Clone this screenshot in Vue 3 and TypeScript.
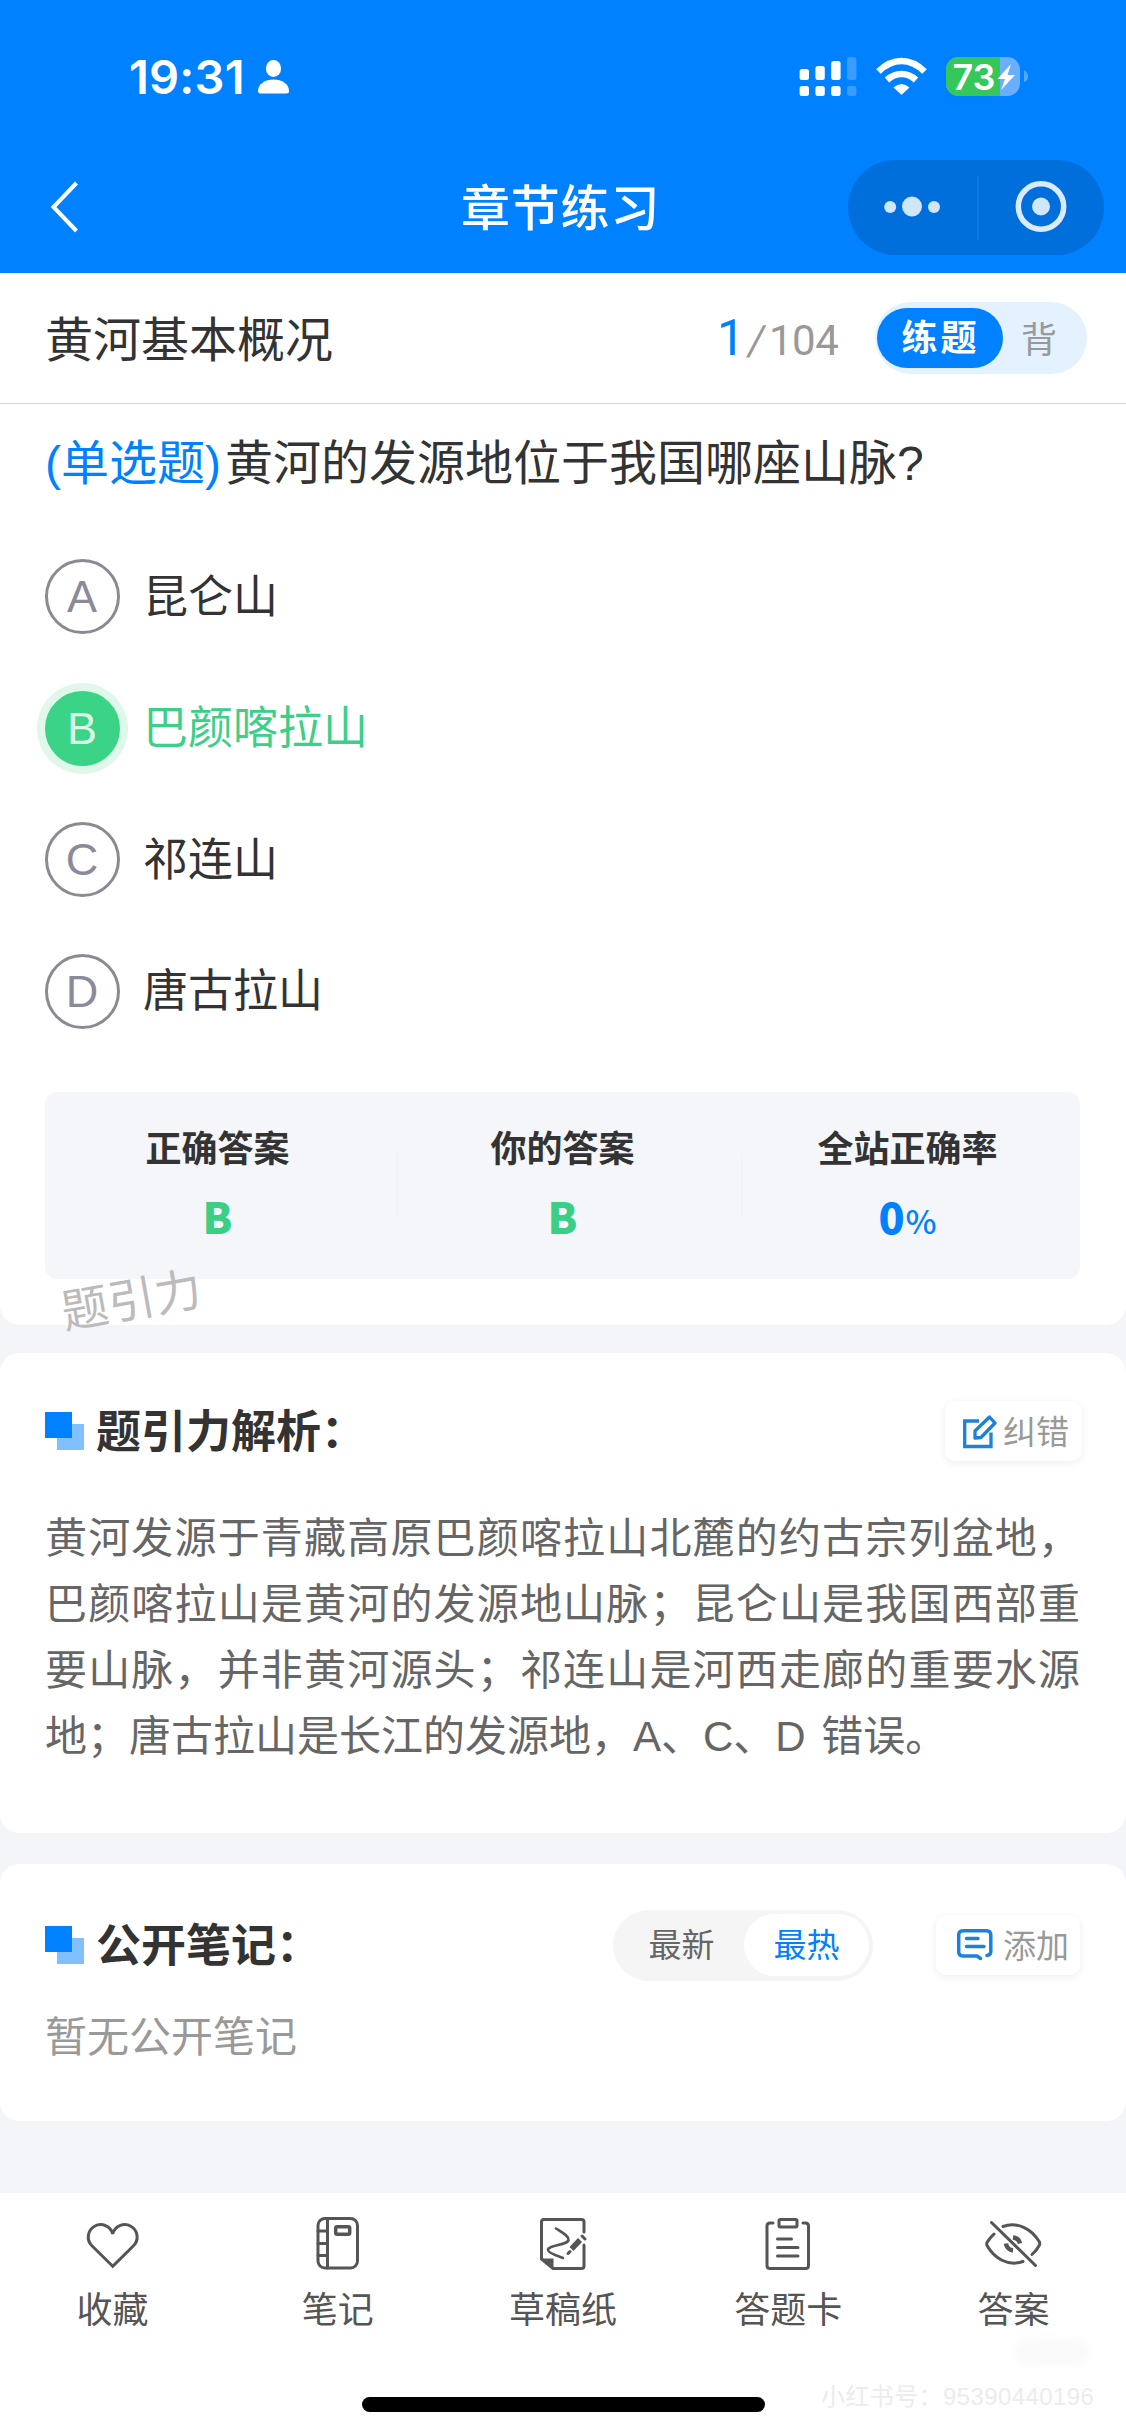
<script setup lang="ts">
interface Option {
  key: string
  text: string
  correct?: boolean
}

const options: Option[] = [
  { key: 'A', text: '昆仑山' },
  { key: 'B', text: '巴颜喀拉山', correct: true },
  { key: 'C', text: '祁连山' },
  { key: 'D', text: '唐古拉山' },
]

const explanation =
  '黄河发源于青藏高原巴颜喀拉山北麓的约古宗列盆地，巴颜喀拉山是黄河的发源地山脉；昆仑山是我国西部重要山脉，并非黄河源头；祁连山是河西走廊的重要水源地；唐古拉山是长江的发源地，A、C、D 错误。'
</script>

<template>
  <div class="page">
    <header class="header">
      <div class="status">
        <span class="time">19:31</span>
        <svg class="person" width="31" height="34" viewBox="0 0 31 34" fill="#fff">
          <ellipse cx="15.5" cy="8.5" rx="7.6" ry="8.5" />
          <path d="M0 31C0 24 7 19.5 15.500 19.500S31 24 31 31Q31 33.500 28.500 33.500H2.500Q0 33.500 0 31Z" />
        </svg>
        <svg class="indicators" width="230" height="40" viewBox="799 56 230 40">
          <g fill="#fff">
            <rect x="799.6" y="68" width="9.4" height="11" rx="2.500" />
            <rect x="815.4" y="65" width="9.4" height="14" rx="2.500" />
            <rect x="831.2" y="60" width="9.4" height="19" rx="2.500" />
            <rect x="799.6" y="85" width="9.4" height="10" rx="2.500" />
            <rect x="815.4" y="85" width="9.4" height="10" rx="2.500" />
            <rect x="831.2" y="85" width="9.4" height="10" rx="2.500" />
            <g opacity=".22">
              <rect x="847" y="56" width="9.4" height="23" rx="2.500" />
              <rect x="847" y="85" width="9.4" height="10" rx="2.500" />
            </g>
          </g>
          <g fill="none" stroke="#fff" stroke-width="6.500">
            <path d="M878.500 70.500Q889 60 901.500 60T924.500 70.500" />
            <path d="M887 79Q893.500 73 901.500 73T916 79" />
          </g>
          <path d="M893.500 86.500Q901.500 79.500 909.500 86.500L902.500 93Q901.500 94 900.500 93Z" fill="#fff" />
          <rect x="946" y="56" width="74" height="39" rx="12.500" fill="#69aeff" />
          <path d="M958.500 56H1000V95H958.500A12.500 12.500 0 0 1 946 82.500V68.500A12.500 12.500 0 0 1 958.500 56Z" fill="#35c759" />
          <path d="M1024 69Q1028 71 1028 75.500T1024 81Z" fill="#55a6ff" />
          <text x="952.500" y="88.500" class="charge" textLength="43" lengthAdjust="spacingAndGlyphs">73</text>
          <path d="M1011 63L997.500 78H1005L1001 89L1015 74H1007.500Z" fill="#fff" />
        </svg>
      </div>
      <div class="nav">
        <svg class="back" width="30" height="54" viewBox="51 180 30 54" fill="none" stroke="#fff" stroke-width="4">
          <path d="M77.500 183L54.500 207L77.500 231" />
        </svg>
        <h1 class="title">章节练习</h1>
        <div class="capsule">
          <svg width="256" height="95" viewBox="848 160 256 95">
            <g fill="#cfe6fb">
              <circle cx="890.200" cy="207" r="6" />
              <circle cx="912" cy="206.500" r="10" />
              <circle cx="934" cy="207" r="6" />
              <circle cx="1041" cy="206.500" r="9" />
            </g>
            <circle cx="1041" cy="206.500" r="22.700" fill="none" stroke="#d9ebff" stroke-width="5.500" />
            <rect x="977" y="176" width="2" height="64" fill="#0a78e3" />
          </svg>
        </div>
      </div>
    </header>

    <section class="chapter">
      <span class="chapter-name">黄河基本概况</span>
      <span class="count"><b>1</b><i>/</i><em>104</em></span>
      <div class="mode">
        <span class="mode-on">练题</span>
        <span class="mode-off">背</span>
      </div>
    </section>

    <main class="question card">
      <p class="stem"><span class="kind">(单选题)</span>黄河的发源地位于我国哪座山脉?</p>
      <ul class="options">
        <li v-for="o in options" :key="o.key" :class="{ correct: o.correct }">
          <span class="dot">{{ o.key }}</span>
          <span class="option-text">{{ o.text }}</span>
        </li>
      </ul>
      <div class="stats">
        <div class="stat"><span>正确答案</span><strong>B</strong></div>
        <div class="stat"><span>你的答案</span><strong>B</strong></div>
        <div class="stat"><span>全站正确率</span><strong class="rate">0<small>%</small></strong></div>
      </div>
      <span class="stamp">题引力</span>
    </main>

    <section class="analysis card">
      <div class="head">
        <span class="mark"></span>
        <h2>题引力解析：</h2>
        <button class="action fix">
          <svg width="35" height="35" viewBox="962 1412.500 35 35" fill="none" stroke="#1b82dc" stroke-width="3.300">
            <path d="M979 1419.500H964.700V1445H991V1431" />
            <path d="M975 1436.500V1429.500L989.500 1415.500L995 1421.500L981 1436Z" stroke-linejoin="round" />
          </svg>
          <span>纠错</span>
        </button>
      </div>
      <p class="explain">{{ explanation }}</p>
    </section>

    <section class="notes card">
      <div class="head">
        <span class="mark"></span>
        <h2>公开笔记：</h2>
        <div class="sort">
          <span>最新</span>
          <span class="sort-on">最热</span>
        </div>
        <button class="action add">
          <svg width="38" height="34" viewBox="956 1928 38 34" fill="none" stroke="#1b82dc" stroke-width="3.500" stroke-linecap="round">
            <path d="M980.500 1958.500L977 1956H963Q958.700 1956 958.700 1951.500V1935Q958.700 1930.700 963 1930.700H986.500Q990.800 1930.700 990.800 1935V1951.500Q990.800 1955 987 1955.500" />
            <path d="M966.500 1938.500H978M966.500 1946.500H984" />
          </svg>
          <span>添加</span>
        </button>
      </div>
      <p class="empty">暂无公开笔记</p>
    </section>

    <footer class="tabbar">
      <nav class="tabs">
        <a class="tab">
          <svg width="60" height="60" viewBox="83 2214 60 60" class="line">
            <path d="M112.700 2266.300L91.900 2245.800A12.400 12.400 0 1 1 112.700 2234A12.400 12.400 0 1 1 133.500 2245.800Z" />
          </svg>
          收藏
        </a>
        <a class="tab">
          <svg width="60" height="60" viewBox="308 2214 60 60" class="line">
            <rect x="318" y="2218.500" width="39.500" height="49.500" rx="7" />
            <path d="M327.500 2218.500V2268M318 2231H327.500M318 2243.500H327.500M318 2255.500H327.500" />
            <rect x="335.700" y="2226.800" width="14" height="7.500" rx="1.500" stroke-width="3.500" />
          </svg>
          笔记
        </a>
        <a class="tab">
          <svg width="60" height="60" viewBox="533 2214 60 60" class="line">
            <path d="M584 2232V2222Q584 2219.500 581.500 2219.500H544Q541.500 2219.500 541.500 2222V2259L553 2268.500H581.500Q584 2268.500 584 2266V2245" />
            <path d="M543 2259.500H552.500V2267Z" fill="#555" stroke-width="2" />
            <path d="M556 2228.500C563 2233 569 2236 568.500 2240C568 2245 548 2245 548 2250C548 2253 558 2256 563 2258" stroke-width="2.600" />
            <path d="M571.500 2249L580 2240" stroke-width="5.500" stroke-linecap="butt" />
            <path d="M582 2236L585 2239M568 2253.500L570 2251.500" />
          </svg>
          草稿纸
        </a>
        <a class="tab">
          <svg width="60" height="60" viewBox="758 2214 60 60" class="line">
            <path d="M773 2223H770Q767 2223 767 2226V2265.500Q767 2268.500 770 2268.500H805.500Q808.500 2268.500 808.500 2265.500V2226Q808.500 2223 805.500 2223H803" />
            <rect x="779" y="2219.500" width="18" height="7.500" rx="1.500" />
            <path d="M777.500 2239H791.500M777.500 2247.500H798M777.500 2256H798" />
          </svg>
          答题卡
        </a>
        <a class="tab">
          <svg width="60" height="60" viewBox="983 2214 60 60" class="line">
            <path d="M991.500 2222.500L1035.500 2265.500" />
            <path d="M1003 2226.500C1017 2221 1032 2229 1039.500 2242Q1040 2244 1039.500 2245Q1037 2250 1032 2254.500" />
            <path d="M994 2234Q989 2239 987 2242.500Q986.500 2244 987 2245.500C994 2258 1008 2267 1023 2261.500" />
            <path d="M1013 2237.500A8 8 0 0 1 1020 2243.500M1006 2243.500A8 8 0 0 0 1013 2250.500" stroke-width="4.500" stroke-linecap="butt" />
          </svg>
          答案
        </a>
      </nav>
      <div class="home"></div>
      <span class="account">小红书号：95390440196</span>
      <span class="smudge"></span>
    </footer>
  </div>
</template>

<style>
body {
  margin: 0;
  background: #f4f5f8;
}
</style>

<style scoped>
.page {
  width: 1126px;
  height: 2436px;
  overflow: hidden;
  display: flex;
  flex-direction: column;
  background: #f4f5f8;
  color: #333;
  font-family: "Liberation Sans", "Noto Sans CJK SC", sans-serif;
}
h1, h2, p, ul {
  margin: 0;
  padding: 0;
}
svg {
  display: block;
  flex: none;
}

.header {
  height: 273px;
  flex: none;
  background: #0081ff;
  color: #fff;
}
.status {
  height: 154px;
  display: flex;
  align-items: center;
}
.time {
  width: 116px;
  margin-left: 129px;
  font: 600 47px/60px Inter, sans-serif;
  letter-spacing: 0.200px;
  white-space: nowrap;
}
.person {
  margin-left: 13px;
}
.indicators {
  margin-left: 510px;
}
.charge {
  font: 600 35px Inter, sans-serif;
  fill: #fff;
}
.nav {
  height: 95px;
  margin-top: 6px;
  display: flex;
  align-items: center;
}
.back {
  margin: 0 0 1px 50px;
}
.title {
  flex: 1;
  margin-left: 381px;
  padding-top: 2px;
  font-size: 49px;
  line-height: 60px;
  font-weight: 500;
  letter-spacing: 0.800px;
}
.capsule {
  margin-right: 22px;
  border-radius: 48px;
  background: #006fdb;
}

.chapter {
  height: 130px;
  flex: none;
  display: flex;
  align-items: center;
  border-bottom: 1px solid #d9d9d9;
  background: #fff;
}
.chapter-name {
  flex: 1;
  margin-left: 45px;
  padding-bottom: 4px;
  font-size: 48px;
}
.count {
  width: 158px;
  display: flex;
  align-items: baseline;
  font-family: Roboto, sans-serif;
  color: #999;
}
.count b {
  width: 31px;
  font-size: 50px;
  font-weight: 400;
  color: #0081ff;
}
.count i {
  width: 21px;
  font-size: 42px;
  font-weight: 400;
  transform: skewX(-8deg);
  font-style: normal;
}
.count em {
  font-size: 42px;
  font-style: normal;
  letter-spacing: -0.500px;
}
.mode {
  display: flex;
  align-items: center;
  width: 212px;
  height: 72px;
  margin-right: 39px;
  border-radius: 36px;
  background: #e4f2ff;
  font-size: 36px;
}
.mode-on {
  width: 126px;
  height: 60px;
  margin-left: 2px;
  border-radius: 30px;
  background: #0081ff;
  color: #fff;
  font-weight: 700;
  line-height: 62px;
  letter-spacing: 3px;
  text-indent: 1px;
  text-align: center;
}
.mode-off {
  margin-left: 18px;
  padding-bottom: 2px;
  color: #999;
}

.card {
  flex: none;
  border-radius: 20px;
  background: #fff;
}
.question {
  position: relative;
  height: 921px;
  border-radius: 0 0 20px 20px;
}
.stem {
  padding: 27px 45px 0;
  font-size: 48px;
  line-height: 66px;
}
.kind {
  margin-right: 4px;
  color: #0081ff;
}
.options {
  padding-top: 34px;
  list-style: none;
}
.options li {
  display: flex;
  align-items: center;
  height: 131.500px;
  padding-left: 45px;
  font-size: 45px;
}
.option-text {
  padding-bottom: 7px;
}
.dot {
  box-sizing: border-box;
  width: 75px;
  height: 75px;
  margin-right: 23px;
  padding-right: 1px;
  border: 3px solid #8a8a93;
  border-radius: 50%;
  color: #8a8a9a;
  line-height: 69px;
  text-align: center;
}
.correct {
  color: #3ccf88;
}
.correct .dot {
  border-color: #3bd385;
  background: #3bd385;
  box-shadow: 0 0 0 8px #dff8ea;
  color: #d9f8e7;
}
.stats {
  display: flex;
  width: 1035px;
  height: 187px;
  margin: 35px 0 0 45px;
  border-radius: 12px;
  background: #f4f6f9;
}
.stat {
  position: relative;
  flex: 1;
  display: flex;
  flex-direction: column;
  align-items: center;
  font-family: "Noto Sans CJK SC", sans-serif;
  font-size: 36px;
  font-weight: 700;
}
.stat span {
  margin-top: 28px;
  line-height: 52px;
}
.stat strong {
  margin-top: 12px;
  line-height: 62px;
  font-size: 43px;
  color: #3bcf86;
}
.stat .rate {
  color: #0081ff;
}
.rate small {
  margin-left: 1px;
  font-size: 33px;
  font-weight: 500;
}
.stat + .stat::before {
  content: "";
  position: absolute;
  left: 6px;
  top: 62px;
  width: 2px;
  height: 62px;
  background: #f1f3f7;
}
.stamp {
  position: absolute;
  left: 61px;
  top: 867px;
  font-size: 47px;
  line-height: 60px;
  color: #bbb;
  transform: rotate(-10deg);
}

.analysis {
  height: 480px;
  margin-top: 28px;
}
.notes {
  height: 257px;
  margin-top: 31px;
}
.head {
  display: flex;
  align-items: center;
  height: 64px;
}
.analysis .head {
  padding-top: 46px;
}
.notes .head {
  padding-top: 49px;
}
.mark {
  position: relative;
  width: 27px;
  height: 26px;
  margin: 0 24px 12px 45px;
  background: #0081ff;
}
.mark::after {
  content: "";
  position: absolute;
  left: 12px;
  top: 12px;
  width: 27px;
  height: 26px;
  background: #80c0ff;
  clip-path: polygon(15px 0, 100% 0, 100% 100%, 0 100%, 0 14px, 15px 14px);
}
.head h2 {
  flex: 1;
  padding-top: 3px;
  font-size: 45px;
  line-height: 60px;
  font-weight: 700;
  white-space: nowrap;
}
.action {
  box-sizing: border-box;
  display: flex;
  align-items: center;
  height: 60px;
  padding: 0;
  border: 0;
  border-radius: 10px;
  background: #fff;
  box-shadow: 0 2px 8px rgba(0, 0, 0, 0.07);
  color: #999;
  font: inherit;
  font-size: 33px;
  white-space: nowrap;
}
.action span {
  padding-bottom: 3px;
}
.fix {
  width: 137px;
  margin-right: 44px;
  padding-left: 17px;
  gap: 6px;
}
.add {
  width: 144px;
  margin-right: 46px;
  padding-left: 20px;
  gap: 9px;
}
.explain {
  padding: 43px 46px 0 45px;
  font-size: 42px;
  line-height: 66px;
  word-spacing: 4px;
  color: #666;
  text-align: justify;
}
.sort {
  box-sizing: border-box;
  display: flex;
  align-items: center;
  width: 260px;
  height: 71px;
  margin-right: 63px;
  padding-right: 4px;
  border-radius: 36px;
  background: #f5f5f5;
  color: #666;
  font-size: 33px;
}
.sort span {
  flex: 1;
  height: 62px;
  line-height: 64px;
  text-align: center;
}
.sort span:first-child {
  padding-left: 6px;
}
.sort .sort-on {
  border-radius: 31px;
  background: #fff;
  color: #0081ff;
}
.empty {
  padding: 31px 45px 0;
  font-size: 42px;
  line-height: 60px;
  color: #999;
}

.tabbar {
  position: relative;
  height: 243px;
  flex: none;
  margin-top: 72px;
  background: #fff;
}
.tabs {
  display: flex;
}
.tab {
  flex: 1;
  display: flex;
  flex-direction: column;
  align-items: center;
  padding-top: 21px;
  gap: 12px;
  color: #555;
  font-size: 36px;
  line-height: 50px;
}
.line {
  fill: none;
  stroke: #555;
  stroke-width: 3;
  stroke-linecap: round;
}
.home {
  width: 403px;
  height: 15px;
  margin: 61px auto 0;
  border-radius: 8px;
  background: #000;
}
.account {
  position: absolute;
  left: 821px;
  top: 188px;
  font-size: 24px;
  line-height: 32px;
  letter-spacing: 0.400px;
  color: #ececec;
  white-space: nowrap;
}
.smudge {
  position: absolute;
  left: 1014px;
  top: 146px;
  width: 76px;
  height: 26px;
  border-radius: 13px;
  background: #fafafa;
  filter: blur(4px);
}
</style>
